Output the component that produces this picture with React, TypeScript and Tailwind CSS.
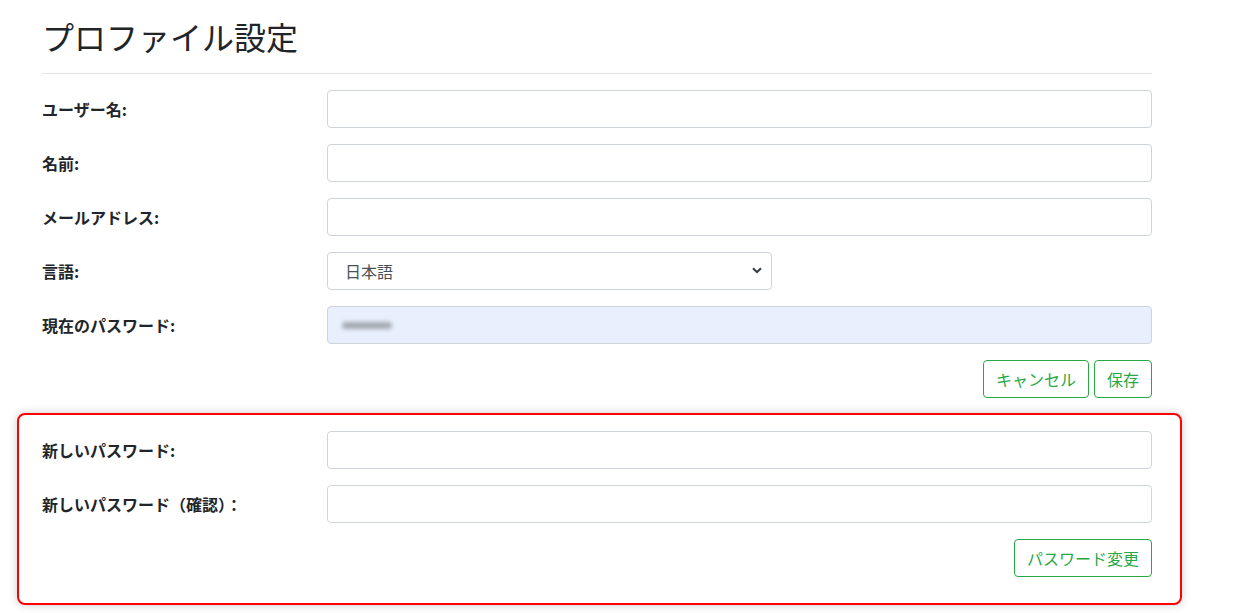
import React, { useState } from 'react';

const font = { fontFamily: '"Noto Sans CJK JP", "Noto Sans", sans-serif' };

type RowProps = {
	label: string;
	children: React.ReactNode;
};

function Row({ label, children }: RowProps) {
	return (
		<div className="flex items-center mb-4">
			<label className="w-[285px] shrink-0 text-[16px] font-bold text-[#212529]">{label}</label>
			<div className="flex-1">{children}</div>
		</div>
	);
}

const inputClass =
	'block w-full h-[38px] px-3 rounded border border-[#ced4da] bg-white text-[16px] text-[#495057] outline-none';

const btnClass =
	'h-[38px] px-3 rounded border border-[#28a745] bg-white text-[16px] text-[#28a745]';

export default function App() {
	const [form, setForm] = useState({ username: '', name: '', email: '', lang: 'ja', newPw: '', confirmPw: '' });

	const onChange = (e: React.ChangeEvent<HTMLInputElement | HTMLSelectElement>) => {
		const { id, value } = e.target;
		setForm((prev) => ({ ...prev, [id]: value }));
	};

	return (
		<div className="w-[1244px] h-[613px] bg-white overflow-hidden" style={font}>
			<div className="w-[1110px] ml-[42px] pt-[14px]">
				<h2 className="text-[32px] leading-[44px] font-normal text-[#212529]">プロファイル設定</h2>
				<hr className="mt-[15px] mb-4 border-t border-[#e5e5e5]" />

				<Row label="ユーザー名:">
					<input id="username" className={inputClass} value={form.username} onChange={onChange} />
				</Row>
				<Row label="名前:">
					<input id="name" className={inputClass} value={form.name} onChange={onChange} />
				</Row>
				<Row label="メールアドレス:">
					<input id="email" className={inputClass} value={form.email} onChange={onChange} />
				</Row>
				<Row label="言語:">
					<div className="relative w-[445px]">
						<select
							id="lang"
							className="block w-full h-[38px] pl-[17px] pr-8 rounded border border-[#ced4da] bg-white text-[16px] text-[#495057] appearance-none outline-none"
							value={form.lang}
							onChange={onChange}
						>
							<option value="ja">日本語</option>
							<option value="en">English</option>
						</select>
						<svg
							className="absolute right-[10px] top-[15px] pointer-events-none"
							width="10"
							height="7"
							viewBox="0 0 10 7"
						>
							<path d="M1 1.2 L5 5.2 L9 1.2" fill="none" stroke="#343a40" strokeWidth="2" />
						</svg>
					</div>
				</Row>
				<Row label="現在のパスワード:">
					<div className="w-full h-[38px] px-3 rounded border border-[#ced4da] bg-[#e8f0fe] flex items-center">
						<span className="block w-[50px] h-[7px] ml-[2px] rounded-full bg-[#a3a8af] blur-[2px]" />
					</div>
				</Row>

				<div className="flex justify-end gap-[5px] mb-[15px]">
					<button className={btnClass}>キャンセル</button>
					<button className={btnClass}>保存</button>
				</div>
			</div>

			<div className="w-[1165px] ml-[17px] border-2 border-[#ff0000] rounded-[8px] shadow-[0_0_10px_rgba(0,0,0,0.2)] pt-4 pl-[23px] pr-[28px] pb-[26px]">
				<Row label="新しいパスワード:">
					<input id="newPw" type="password" className={inputClass} value={form.newPw} onChange={onChange} />
				</Row>
				<Row label="新しいパスワード（確認）：">
					<input id="confirmPw" type="password" className={inputClass} value={form.confirmPw} onChange={onChange} />
				</Row>
				<div className="flex justify-end">
					<button className={btnClass}>パスワード変更</button>
				</div>
			</div>
		</div>
	);
}
